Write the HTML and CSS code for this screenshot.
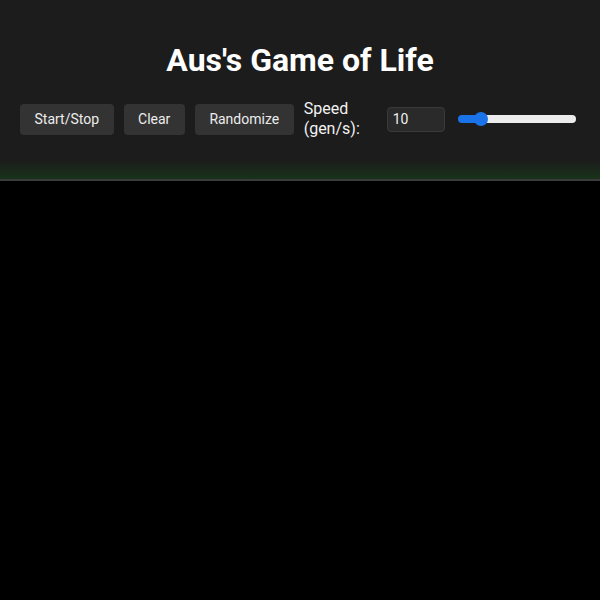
FILE: index.html
```html
<!DOCTYPE html>
<html lang="en">
<head>
<meta charset="utf-8">
<title>Aus's Game of Life</title>
<link rel="stylesheet" href="styles.css">
</head>
<body>
<header class="header">
  <h1 class="title">Aus's Game of Life</h1>
  <div class="controls">
    <button class="btn">Start/Stop</button>
    <button class="btn">Clear</button>
    <button class="btn">Randomize</button>
    <label class="speed-label" for="speed">Speed (gen/s):</label>
    <input class="speed-input" id="speed" type="text" value="10">
    <input class="slider" type="range" min="1" max="60" value="10">
  </div>
</header>
<main class="board"></main>
</body>
</html>
```
FILE: styles.css
```css
html, body {
  margin: 0;
  padding: 0;
  height: 100%;
  background: #000;
  font-family: Roboto, "Liberation Sans", sans-serif;
  color: #f2f2f2;
}
.header {
  height: 181px;
  box-sizing: border-box;
  padding-top: 40px;
  background: linear-gradient(to bottom, #1c1c1c 0px, #1c1c1c 160px, #1a2a1a 172px, #17331a 179px);
  border-bottom: 2px solid #3b3b3b;
}
.title {
  margin: 0;
  text-align: center;
  font-size: 32px;
  font-weight: 700;
  line-height: 40px;
  color: #ffffff;
}
.controls {
  display: flex;
  align-items: center;
  padding-left: 20px;
  margin-top: 19px;
  gap: 10px;
}
.btn {
  font-family: Roboto, "Liberation Sans", sans-serif;
  font-size: 14px;
  line-height: 16px;
  height: 31px;
  padding: 0 14.5px;
  border: none;
  border-radius: 4px;
  background: #333333;
  color: #ececec;
}
.speed-label {
  font-size: 16px;
  line-height: 20px;
  width: 73px;
  color: #f2f2f2;
}
.speed-input {
  box-sizing: border-box;
  width: 58px;
  height: 25px;
  padding: 0 5px;
  border: 1px solid #3a3a3a;
  border-radius: 4px;
  background: #2a2a2a;
  color: #f0f0f0;
  font-family: Roboto, "Liberation Sans", sans-serif;
  font-size: 14px;
}
.slider {
  -webkit-appearance: none;
  appearance: none;
  width: 118px;
  height: 8px;
  margin: 0 0 0 3px;
  border-radius: 4px;
  background: linear-gradient(to right, #1a73e8 0, #1a73e8 24px, #ececec 24px, #ececec 100%);
  outline: none;
}
.slider::-webkit-slider-thumb {
  -webkit-appearance: none;
  appearance: none;
  width: 14px;
  height: 14px;
  border-radius: 50%;
  background: #1a73e8;
  border: none;
}
.board {
  background: #000;
}
```
